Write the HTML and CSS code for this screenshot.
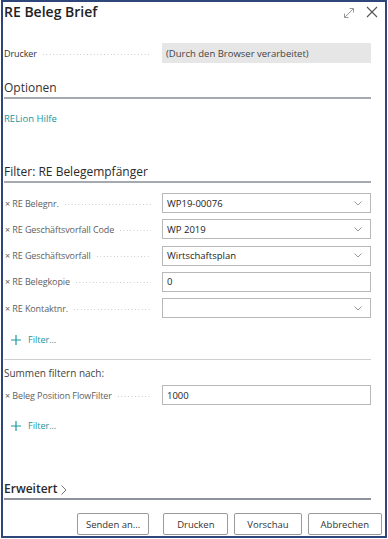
FILE: index.html
```html
<!DOCTYPE html>
<html lang="de">
<head>
  <meta charset="UTF-8" />
  <title>RE Beleg Brief</title>
  <link rel="stylesheet" href="styles.css">
</head>
<body>

<div class="dialog">
  <div class="title-bar">
    <h1 class="title">RE Beleg Brief</h1>
    <div class="title-icons">
      <svg class="icon-expand" width="12" height="12" viewBox="0 0 12 12">
        <path d="M1.5 10.5 L10.5 1.5 M6.5 1.5 H10.5 V5.5 M1.5 6.5 V10.5 H5.5" fill="none" stroke="#9a9a9a" stroke-width="1"/>
      </svg>
      <svg class="icon-close" width="12" height="12" viewBox="0 0 12 12">
        <path d="M1 1 L11 11 M11 1 L1 11" fill="none" stroke="#555" stroke-width="1.1"/>
      </svg>
    </div>
  </div>

  <div class="form">
    <div class="row row-first">
      <div class="label plain"><span>Drucker</span><i class="leader"></i></div>
      <div class="field readonly">(Durch den Browser verarbeitet)</div>
    </div>

    <h2 class="group">Optionen</h2>
    <a class="link help" href="#">RELion Hilfe</a>

    <h2 class="group strong filter-head">Filter: RE Belegempfänger</h2>
    <div class="rows">
      <div class="row">
        <div class="label"><span>× RE Belegnr.</span><i class="leader"></i></div>
        <div class="field select">WP19-00076<svg class="chev" width="8" height="5" viewBox="0 0 8 5"><path d="M0.5 0.5 L4 4 L7.5 0.5" fill="none" stroke="#999"/></svg></div>
      </div>
      <div class="row">
        <div class="label"><span>× RE Geschäftsvorfall Code</span><i class="leader"></i></div>
        <div class="field select">WP 2019<svg class="chev" width="8" height="5" viewBox="0 0 8 5"><path d="M0.5 0.5 L4 4 L7.5 0.5" fill="none" stroke="#999"/></svg></div>
      </div>
      <div class="row">
        <div class="label"><span>× RE Geschäftsvorfall</span><i class="leader"></i></div>
        <div class="field select">Wirtschaftsplan<svg class="chev" width="8" height="5" viewBox="0 0 8 5"><path d="M0.5 0.5 L4 4 L7.5 0.5" fill="none" stroke="#999"/></svg></div>
      </div>
      <div class="row">
        <div class="label"><span>× RE Belegkopie</span><i class="leader"></i></div>
        <div class="field">0</div>
      </div>
      <div class="row">
        <div class="label"><span>× RE Kontaktnr.</span><i class="leader"></i></div>
        <div class="field select"><svg class="chev" width="8" height="5" viewBox="0 0 8 5"><path d="M0.5 0.5 L4 4 L7.5 0.5" fill="none" stroke="#999"/></svg></div>
      </div>
    </div>
    <a class="link add-filter first-add" href="#"><svg width="10" height="10" viewBox="0 0 10 10"><path d="M5 0 V10 M0 5 H10" stroke="#1b9aa0" stroke-width="1.2"/></svg>Filter...</a>

    <div class="divider"></div>

    <div class="sub-head">Summen filtern nach:</div>
    <div class="row row-flow">
      <div class="label"><span>× Beleg Position FlowFilter</span><i class="leader"></i></div>
      <div class="field">1000</div>
    </div>
    <a class="link add-filter" href="#"><svg width="10" height="10" viewBox="0 0 10 10"><path d="M5 0 V10 M0 5 H10" stroke="#1b9aa0" stroke-width="1.2"/></svg>Filter...</a>

    <h2 class="group advanced">Erweitert<svg class="more" width="6" height="10" viewBox="0 0 6 10"><path d="M0.5 0.5 L5 5 L0.5 9.5" fill="none" stroke="#777"/></svg></h2>
  </div>

  <div class="actions">
    <button class="btn send">Senden an...</button>
    <button class="btn">Drucken</button>
    <button class="btn">Vorschau</button>
    <button class="btn">Abbrechen</button>
  </div>
</div>

</body>
</html>
```

FILE: styles.css
```css
* { box-sizing: border-box; font-family: 'Open Sans', 'Noto Sans', sans-serif; }
body {
  margin: 0;
  background: #fff;
  color: #333;
}

.dialog {
  margin-left: 1px;
  width: 386px;
  height: 538px;
  border: 2px solid #2e4679;
  padding: 0 0 0 1px;
  display: flex;
  flex-direction: column;
}

/* Title */
.title-bar {
  display: flex;
  align-items: center;
  justify-content: space-between;
  height: 20px;
  padding-right: 7px;
}
.title {
  margin: 0;
  font-size: 14px;
  font-weight: 600;
  line-height: 20px;
  color: #222;
}
.title-icons {
  display: flex;
  align-items: center;
  gap: 11px;
}
.icon-expand { margin-top: 1px; }

/* Form */
.form {
  width: 367px;
}

.row {
  display: flex;
  align-items: center;
  height: 20px;
}
.row-first { margin-top: 21px; }
.row-flow { margin-top: 5px; }

.label {
  width: 158px;
  display: flex;
  align-items: center;
  padding: 0 11px 0 1px;
  font-size: 9px;
  letter-spacing: -0.1px;
  color: #5e5e5e;
  white-space: nowrap;
}
.label.plain { color: #333; padding-left: 0; }
.leader {
  flex: 1;
  height: 1px;
  margin: 2px 0 0 6px;
  background: linear-gradient(to right, #c4c4c4 1px, transparent 1px) repeat-x;
  background-size: 3.4px 1px;
}

.field {
  flex: 1;
  height: 20px;
  display: flex;
  align-items: center;
  justify-content: space-between;
  padding: 0 8px 0 4px;
  border: 1px solid #b8b8b8;
  font-size: 9.5px;
  color: #222;
}
.field.readonly {
  border: none;
  background: #e6e6e6;
  color: #444;
  padding-left: 4px;
}
.chev { margin-left: auto; }

.rows {
  display: flex;
  flex-direction: column;
  gap: 6.3px;
  margin-top: 10px;
}

.group {
  margin: 16px 0 0;
  font-size: 12px;
  font-weight: 400;
  line-height: 18px;
  color: #333;
  border-bottom: 2px solid #a5aab2;
}
.group.strong { font-weight: 500; color: #2a2a2a; }
.filter-head { margin-top: 37px; }
.group.advanced {
  margin-top: 46px;
  display: flex;
  align-items: center;
  gap: 3px;
  font-weight: 600;
  color: #2a2a2a;
  border-bottom-color: #8e939b;
}
.more { margin-top: 1px; }

.link {
  display: flex;
  align-items: center;
  color: #17969c;
  text-decoration: none;
  font-size: 9.5px;
}
.help {
  margin-top: 13px;
  line-height: 14px;
}
.add-filter {
  margin-top: 13px;
  padding-left: 7px;
  gap: 7px;
  line-height: 16px;
  font-size: 9px;
}
.first-add { margin-top: 14px; }

.divider {
  margin-top: 11px;
  height: 1px;
  background: #cfcfcf;
}

.sub-head {
  margin-top: 6px;
  font-size: 10px;
  line-height: 14px;
  color: #444;
}

/* Buttons */
.actions {
  display: flex;
  justify-content: flex-end;
  gap: 6px;
  margin-top: 13px;
  padding-right: 3px;
}
.btn {
  height: 22px;
  min-width: 65px;
  padding: 0 12px;
  background: #fff;
  border: 1px solid #9a9a9a;
  border-radius: 2px;
  font-size: 9.5px;
  color: #333;
}
.btn.send {
  padding: 0 8px;
  margin-right: 8px;
}
```
